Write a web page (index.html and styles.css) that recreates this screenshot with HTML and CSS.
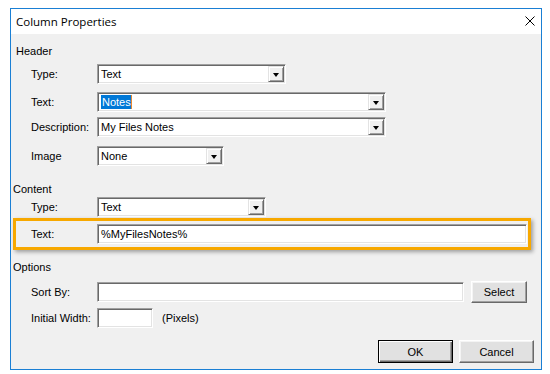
FILE: index.html
```html
<!DOCTYPE html>
<html lang="en">

<head>
    <meta charset="UTF-8">
    <meta name="viewport" content="width=device-width, initial-scale=1.0">
    <title>Column Properties</title>
    <link rel="stylesheet" href="styles.css">
</head>

<body>
    <div class="dialog">
        <div class="titlebar">
            <span class="title">Column Properties</span>
            <svg class="close" width="10" height="10" viewBox="0 0 10 10">
                <path d="M0.5 0.5 L9.5 9.5 M9.5 0.5 L0.5 9.5" stroke="#000" stroke-width="1" fill="none"/>
            </svg>
        </div>

        <div class="dialog-body">
            <div class="section-label header-label">Header</div>

            <div class="row row-type">
                <span class="label">Type:</span>
                <div class="combo combo-short">
                    <span class="combo-text">Text</span>
                    <span class="combo-btn"><i class="arrow"></i></span>
                </div>
            </div>
            <div class="row row-text">
                <span class="label">Text:</span>
                <div class="combo combo-long">
                    <span class="combo-text"><span class="selected">Notes</span></span>
                    <span class="combo-btn"><i class="arrow"></i></span>
                </div>
            </div>
            <div class="row row-desc">
                <span class="label">Description:</span>
                <div class="combo combo-long">
                    <span class="combo-text">My Files Notes</span>
                    <span class="combo-btn"><i class="arrow"></i></span>
                </div>
            </div>
            <div class="row row-image">
                <span class="label">Image</span>
                <div class="combo combo-image">
                    <span class="combo-text">None</span>
                    <span class="combo-btn"><i class="arrow"></i></span>
                </div>
            </div>

            <div class="section-label content-label">Content</div>

            <div class="row row-ctype">
                <span class="label">Type:</span>
                <div class="combo combo-ctype">
                    <span class="combo-text">Text</span>
                    <span class="combo-btn"><i class="arrow"></i></span>
                </div>
            </div>
            <div class="highlight">
                <div class="row">
                    <span class="label">Text:</span>
                    <div class="field field-wide">%MyFilesNotes%</div>
                </div>
            </div>

            <div class="section-label options-label">Options</div>

            <div class="row row-sort">
                <span class="label">Sort By:</span>
                <div class="field field-sort"></div>
                <button class="btn btn-select">Select</button>
            </div>
            <div class="row row-width">
                <span class="label">Initial Width:</span>
                <div class="field field-small"></div>
                <span class="unit">(Pixels)</span>
            </div>

            <div class="dialog-buttons">
                <button class="btn btn-main btn-default">OK</button>
                <button class="btn btn-main">Cancel</button>
            </div>
        </div>
    </div>
</body>

</html>
```

FILE: styles.css
```css
body {
    margin: 0;
    padding: 8px 0 0 10px;
    background: #ffffff;
    font-family: 'Liberation Sans', Arial, sans-serif;
    font-size: 11px;
    color: #000;
}

.dialog {
    width: 532px;
    height: 362px;
    box-sizing: border-box;
    border: 1px solid #1a7fd4;
    background-color: #f0f0f0;
}

.titlebar {
    height: 25px;
    background-color: #fff;
    display: flex;
    align-items: center;
    justify-content: space-between;
    padding: 0 6px 0 5px;
}

.title {
    font-family: 'Open Sans', 'Noto Sans', sans-serif;
    font-size: 11.5px;
    color: #000;
}

.close {
    display: block;
    margin-top: -1px;
}

.dialog-body {
    display: flex;
    flex-direction: column;
}

.section-label {
    height: 13px;
    line-height: 13px;
}

.header-label {
    margin: 11px 0 0 5px;
}

.content-label {
    margin: 17px 0 0 2px;
}

.options-label {
    margin: 11px 0 0 2px;
}

.row {
    display: flex;
    align-items: center;
    height: 20px;
    padding-left: 20px;
}

.label {
    width: 66px;
    flex-shrink: 0;
    white-space: nowrap;
}

.row-type { margin-top: 6px; }
.row-text { margin-top: 8px; }
.row-desc { margin-top: 5px; }
.row-image { margin-top: 9px; }
.row-ctype { margin-top: 1px; }
.row-sort { margin-top: 7px; height: 22px; }
.row-width { margin-top: 5px; }

/* sunken 3d boxes */
.combo,
.field {
    height: 20px;
    box-sizing: border-box;
    background-color: #fff;
    border: 1px solid;
    border-color: #a0a0a0 #ffffff #ffffff #a0a0a0;
    box-shadow: inset 1px 1px 0 #696969, inset -1px -1px 0 #e3e3e3;
    display: flex;
    align-items: center;
}

.combo-short { width: 189px; }
.combo-long { width: 289px; }
.combo-image { width: 127px; }
.combo-ctype { width: 169px; }

.combo-text {
    flex: 1;
    padding-left: 3px;
    line-height: 14px;
    white-space: nowrap;
}

.selected {
    background-color: #0078d7;
    color: #fff;
    padding: 1px 0 1px 1px;
    border-right: 1px solid #e8892f;
}

.combo-btn {
    width: 16px;
    height: 16px;
    margin-right: 1px;
    box-sizing: border-box;
    background-color: #f0f0f0;
    border: 1px solid;
    border-color: #e3e3e3 #696969 #696969 #e3e3e3;
    box-shadow: inset 1px 1px 0 #fff, inset -1px -1px 0 #a0a0a0;
    display: flex;
    align-items: center;
    justify-content: center;
}

.arrow {
    width: 0;
    height: 0;
    border-left: 3.5px solid transparent;
    border-right: 3.5px solid transparent;
    border-top: 4px solid #000;
    margin-top: 1px;
}

.field {
    padding-left: 3px;
    white-space: nowrap;
}

.field-wide { width: 430px; }
.field-sort { width: 367px; }
.field-small { width: 56px; }

.highlight {
    margin: 1px 0 0 2px;
    width: 518px;
    height: 32px;
    box-sizing: border-box;
    border: 3px solid #f7a800;
    box-shadow: 2px 2px 4px rgba(0, 0, 0, 0.35);
    display: flex;
    align-items: center;
}

.highlight .row {
    padding-left: 15px;
}

.unit {
    margin-left: 9px;
}

.btn {
    font-family: 'Liberation Sans', Arial, sans-serif;
    font-size: 11px;
    color: #000;
    background-color: #e1e1e1;
    box-sizing: border-box;
    border: 1px solid;
    border-color: #fff #696969 #696969 #fff;
    box-shadow: inset -1px -1px 0 #a0a0a0, inset 1px 1px 0 #f4f4f4;
    padding: 0;
    cursor: pointer;
}

.btn-select {
    width: 56px;
    height: 22px;
    margin-left: 7px;
}

.dialog-buttons {
    display: flex;
    justify-content: flex-end;
    gap: 6px;
    padding-right: 7px;
    margin-top: 12px;
}

.btn-main {
    width: 75px;
    height: 23px;
}

.btn-default {
    border-color: #000;
    box-shadow: inset 1px 1px 0 #fff, inset -1px -1px 0 #696969, inset -2px -2px 0 #a0a0a0;
}
```
